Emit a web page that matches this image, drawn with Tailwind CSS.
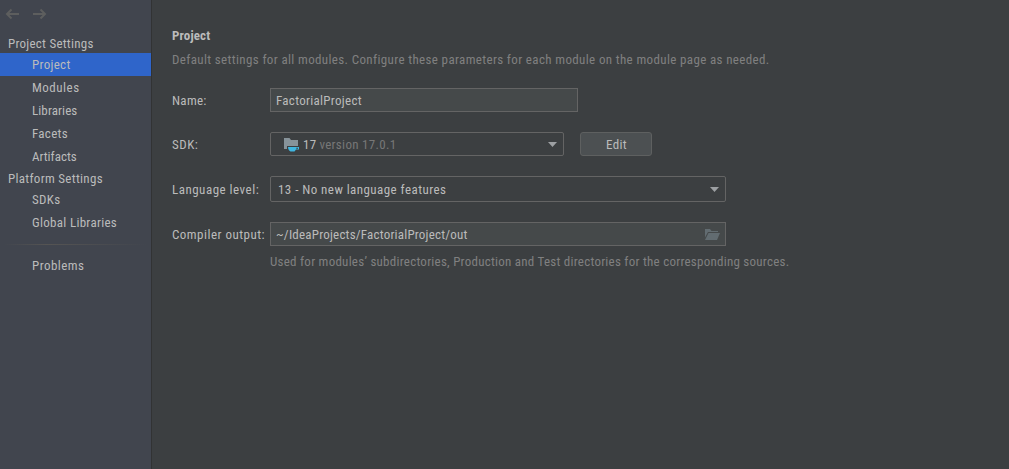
<!DOCTYPE html>
<html lang="en">
<head>
<meta charset="utf-8">
<title>Project Structure</title>
<script src="https://cdn.jsdelivr.net/npm/@tailwindcss/browser@4"></script>
</head>
<body class="flex h-screen overflow-hidden bg-[#3c3f41] font-['Roboto','Liberation_Sans',sans-serif] text-[13px] leading-[23px] tracking-[0.3px] whitespace-nowrap text-[#bbbbbb] font-stretch-semi-condensed">
<aside class="flex w-[152px] shrink-0 flex-col border-r border-[#323334] bg-[#41454e]">
  <div class="flex h-[33px] gap-3 pt-[7px] pl-[5px] text-[#5d5e5e]">
    <svg class="h-[14px] w-[15px]" viewBox="0 0 15 14" fill="none" stroke="currentColor" stroke-width="2"><path d="M14 7H2.500M6.500 2.500L2 7l4.500 4.500"/></svg>
    <svg class="h-[14px] w-[15px]" viewBox="0 0 15 14" fill="none" stroke="currentColor" stroke-width="2"><path d="M1 7h11.500M8.500 2.500L13 7l-4.500 4.500"/></svg>
  </div>
  <div class="h-5 pl-2 leading-[21px] tracking-[0.25px]">Project Settings</div>
  <nav>
    <div class="h-[23px] bg-[#2f65ca] pl-8">Project</div>
    <div class="h-[23px] pl-8 tracking-[0.5px]">Modules</div>
    <div class="h-[23px] pl-8 tracking-[0.1px]">Libraries</div>
    <div class="h-[23px] pl-8">Facets</div>
    <div class="h-[23px] pl-8 tracking-[0px]">Artifacts</div>
  </nav>
  <div class="h-5 pl-2 leading-[21px]">Platform Settings</div>
  <nav>
    <div class="h-[23px] pl-8">SDKs</div>
    <div class="h-[23px] pl-8">Global Libraries</div>
    <div class="flex h-5 items-center px-1"><div class="h-px w-full bg-linear-to-r from-transparent from-0% via-[#555453] via-30% to-transparent to-100%"></div></div>
    <div class="h-[23px] pl-8 tracking-[0.45px]">Problems</div>
  </nav>
</aside>
<main class="flex flex-1 flex-col items-start pt-6 pl-5">
  <h1 class="h-6 font-bold tracking-[0.15px]">Project</h1>
  <p class="h-10 leading-6 tracking-[0.36px] text-[#808080]">Default settings for all modules. Configure these parameters for each module on the module page as needed.</p>
  <div class="flex h-6 items-center">
    <label class="w-[98px]">Name:</label>
    <div class="flex h-6 w-[308px] items-center border border-[#646464] bg-[#45494a] pl-[5px]">FactorialProject</div>
  </div>
  <div class="mt-5 flex h-6 items-center">
    <label class="w-[98px] tracking-[0.5px]">SDK:</label>
    <div class="flex h-6 w-[294px] items-center rounded-[2px] border border-[#646464] pr-[6px] pl-[13px]">
      <svg class="h-4 w-4" viewBox="0 0 16 16"><path fill="#87939a" d="M0 2h5.500l1.500 2h7v6H3v3H0z"/><path fill="#40b6e0" fill-rule="evenodd" d="M4 11h11v2.500h-3L10.500 15.500h-4C5 14.500 4 13 4 11zM12.300 11.800v1h1.700v-1z"/></svg>
      <span class="ml-[3px]">17</span><span class="ml-[3px] text-[#777777]">version 17.0.1</span>
      <svg class="ml-auto h-[5px] w-[9px]" viewBox="0 0 9 5"><path fill="#9da0a3" d="M0 0h9L4.500 5z"/></svg>
    </div>
    <button class="ml-4 flex h-6 w-[72px] items-center justify-center rounded-[3px] border border-[#5e6060] bg-[#4c5052] pl-px">Edit</button>
  </div>
  <div class="mt-5 flex h-[26px] items-center">
    <label class="w-[98px] tracking-[0.5px]">Language level:</label>
    <div class="flex h-[26px] w-[456px] items-center rounded-[2px] border border-[#646464] pr-[6px] pl-[7px]">
      <span class="tracking-[0.44px]">13 - No new language features</span>
      <svg class="ml-auto h-[5px] w-[9px]" viewBox="0 0 9 5"><path fill="#9da0a3" d="M0 0h9L4.500 5z"/></svg>
    </div>
  </div>
  <div class="mt-5 flex h-6 items-center">
    <label class="w-[98px] tracking-[0.48px]">Compiler output:</label>
    <div class="flex h-6 w-[456px] items-center border border-[#646464] bg-[#45494a] pr-[5px] pl-[5px]">
      <span class="tracking-[0.21px]">~/IdeaProjects/FactorialProject/out</span>
      <svg class="ml-auto h-3 w-[15px]" viewBox="0 0 15 12" fill="#626c71"><path d="M0 1h5l1.500 2H13v1H3L0 9.500z"/><path d="M3.500 5H15l-3 7H0z"/></svg>
    </div>
  </div>
  <p class="mt-1 ml-[98px] tracking-[0.25px] text-[#808080]">Used for modules’ subdirectories, Production and Test directories for the corresponding sources.</p>
</main>
</body>
</html>
